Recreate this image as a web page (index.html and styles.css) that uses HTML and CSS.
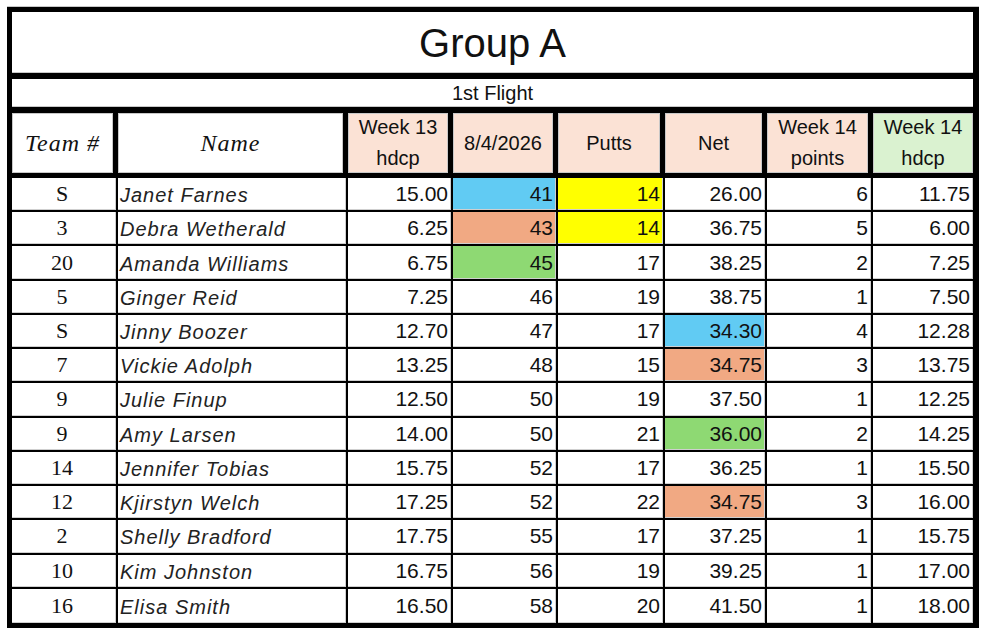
FILE: index.html
```html
<!DOCTYPE html>
<html lang="en">
<head>
<meta charset="utf-8">
<title>Group A</title>
<link rel="stylesheet" href="styles.css">
</head>
<body>
<div class="sheet">
  <div class="title">Group A</div>
  <div class="sub">1st Flight</div>
  <div class="row head">
    <div class="hd script">Team #</div>
    <div class="hd script">Name</div>
    <div class="hd pk">Week 13<br>hdcp</div>
    <div class="hd pk">8/4/2026</div>
    <div class="hd pk">Putts</div>
    <div class="hd pk">Net</div>
    <div class="hd pk">Week 14<br>points</div>
    <div class="hd gn">Week 14<br>hdcp</div>
  </div>
  <div class="row"><div class="c team">S</div><div class="c name">Janet Farnes</div><div class="c n">15.00</div><div class="c n blue">41</div><div class="c n yel">14</div><div class="c n">26.00</div><div class="c n">6</div><div class="c n">11.75</div></div>
  <div class="row"><div class="c team">3</div><div class="c name">Debra Wetherald</div><div class="c n">6.25</div><div class="c n sal">43</div><div class="c n yel">14</div><div class="c n">36.75</div><div class="c n">5</div><div class="c n">6.00</div></div>
  <div class="row"><div class="c team">20</div><div class="c name">Amanda Williams</div><div class="c n">6.75</div><div class="c n grn">45</div><div class="c n">17</div><div class="c n">38.25</div><div class="c n">2</div><div class="c n">7.25</div></div>
  <div class="row"><div class="c team">5</div><div class="c name">Ginger Reid</div><div class="c n">7.25</div><div class="c n">46</div><div class="c n">19</div><div class="c n">38.75</div><div class="c n">1</div><div class="c n">7.50</div></div>
  <div class="row"><div class="c team">S</div><div class="c name">Jinny Boozer</div><div class="c n">12.70</div><div class="c n">47</div><div class="c n">17</div><div class="c n blue">34.30</div><div class="c n">4</div><div class="c n">12.28</div></div>
  <div class="row"><div class="c team">7</div><div class="c name">Vickie Adolph</div><div class="c n">13.25</div><div class="c n">48</div><div class="c n">15</div><div class="c n sal">34.75</div><div class="c n">3</div><div class="c n">13.75</div></div>
  <div class="row"><div class="c team">9</div><div class="c name">Julie Finup</div><div class="c n">12.50</div><div class="c n">50</div><div class="c n">19</div><div class="c n">37.50</div><div class="c n">1</div><div class="c n">12.25</div></div>
  <div class="row"><div class="c team">9</div><div class="c name">Amy Larsen</div><div class="c n">14.00</div><div class="c n">50</div><div class="c n">21</div><div class="c n grn">36.00</div><div class="c n">2</div><div class="c n">14.25</div></div>
  <div class="row"><div class="c team">14</div><div class="c name">Jennifer Tobias</div><div class="c n">15.75</div><div class="c n">52</div><div class="c n">17</div><div class="c n">36.25</div><div class="c n">1</div><div class="c n">15.50</div></div>
  <div class="row"><div class="c team">12</div><div class="c name">Kjirstyn Welch</div><div class="c n">17.25</div><div class="c n">52</div><div class="c n">22</div><div class="c n sal">34.75</div><div class="c n">3</div><div class="c n">16.00</div></div>
  <div class="row"><div class="c team">2</div><div class="c name">Shelly Bradford</div><div class="c n">17.75</div><div class="c n">55</div><div class="c n">17</div><div class="c n">37.25</div><div class="c n">1</div><div class="c n">15.75</div></div>
  <div class="row"><div class="c team">10</div><div class="c name">Kim Johnston</div><div class="c n">16.75</div><div class="c n">56</div><div class="c n">19</div><div class="c n">39.25</div><div class="c n">1</div><div class="c n">17.00</div></div>
  <div class="row"><div class="c team">16</div><div class="c name">Elisa Smith</div><div class="c n">16.50</div><div class="c n">58</div><div class="c n">20</div><div class="c n">41.50</div><div class="c n">1</div><div class="c n">18.00</div></div>
</div>
</body>
</html>
```
FILE: styles.css
```css
html, body {
  margin: 0;
  padding: 0;
  background: #ffffff;
}

body {
  font-family: "Liberation Sans", Arial, sans-serif;
  color: #111111;
}

.sheet {
  display: grid;
  grid-template-columns: 106px 230px 105px 105px 107px 102px 106px 100px;
  grid-template-rows: 67px 34px 65px repeat(13, 1fr);
  width: 961px;
  height: 611px;
  margin: 7px 0 0 7px;
  border: 5px solid #000;
  border-right-width: 6px;
  box-shadow: 0 -1px 0 #c8c8c8, 0 1px 0 #c8c8c8;
}

.sheet > div,
.row > div {
  box-sizing: border-box;
}

.row {
  display: contents;
}

.title {
  grid-column: 1 / -1;
  display: flex;
  align-items: center;
  justify-content: center;
  border-bottom: 6px solid #000;
  font-size: 40px;
  padding-top: 2px;
  box-shadow: inset 0 -1px 0 #c8c8c8;
}

.sub {
  grid-column: 1 / -1;
  display: flex;
  align-items: center;
  justify-content: center;
  border-bottom: 6px solid #000;
  font-size: 20px;
  box-shadow: inset 0 -1px 0 #c8c8c8;
}

.hd {
  display: flex;
  align-items: center;
  justify-content: center;
  text-align: center;
  border-right: 5px solid #000;
  border-bottom: 5px solid #000;
  font-size: 20px;
  line-height: 31px;
  box-shadow: inset 0 0 0 1px #c8c8c8;
}

.head > :last-child {
  border-right: 0;
}

.script {
  font-family: "Liberation Serif", "Times New Roman", serif;
  font-style: italic;
  font-size: 24px;
  letter-spacing: 1px;
}

.pk {
  background: #fbe2d5;
}

.gn {
  background: #daf2d0;
}

.c {
  display: flex;
  align-items: center;
  border-right: 2px solid #000;
  border-bottom: 2px solid #000;
  box-shadow: inset -1px -1px 0 #cfcfcf;
  font-size: 21px;
}

.row > :last-child {
  border-right: 0;
}

.row:last-child > .c {
  border-bottom: 0;
}

.team {
  justify-content: center;
  font-family: "Liberation Serif", "Times New Roman", serif;
  font-size: 22px;
  padding-right: 4px;
}

.name {
  justify-content: flex-start;
  padding-left: 2px;
  padding-top: 3px;
  font-style: italic;
  font-size: 20px;
  letter-spacing: 1px;
  color: #222;
}

.n {
  justify-content: flex-end;
  padding-right: 3px;
}

.blue {
  background: #61cbf3;
}

.sal {
  background: #f1a983;
}

.grn {
  background: #8ed973;
}

.yel {
  background: #ffff00;
}
```
